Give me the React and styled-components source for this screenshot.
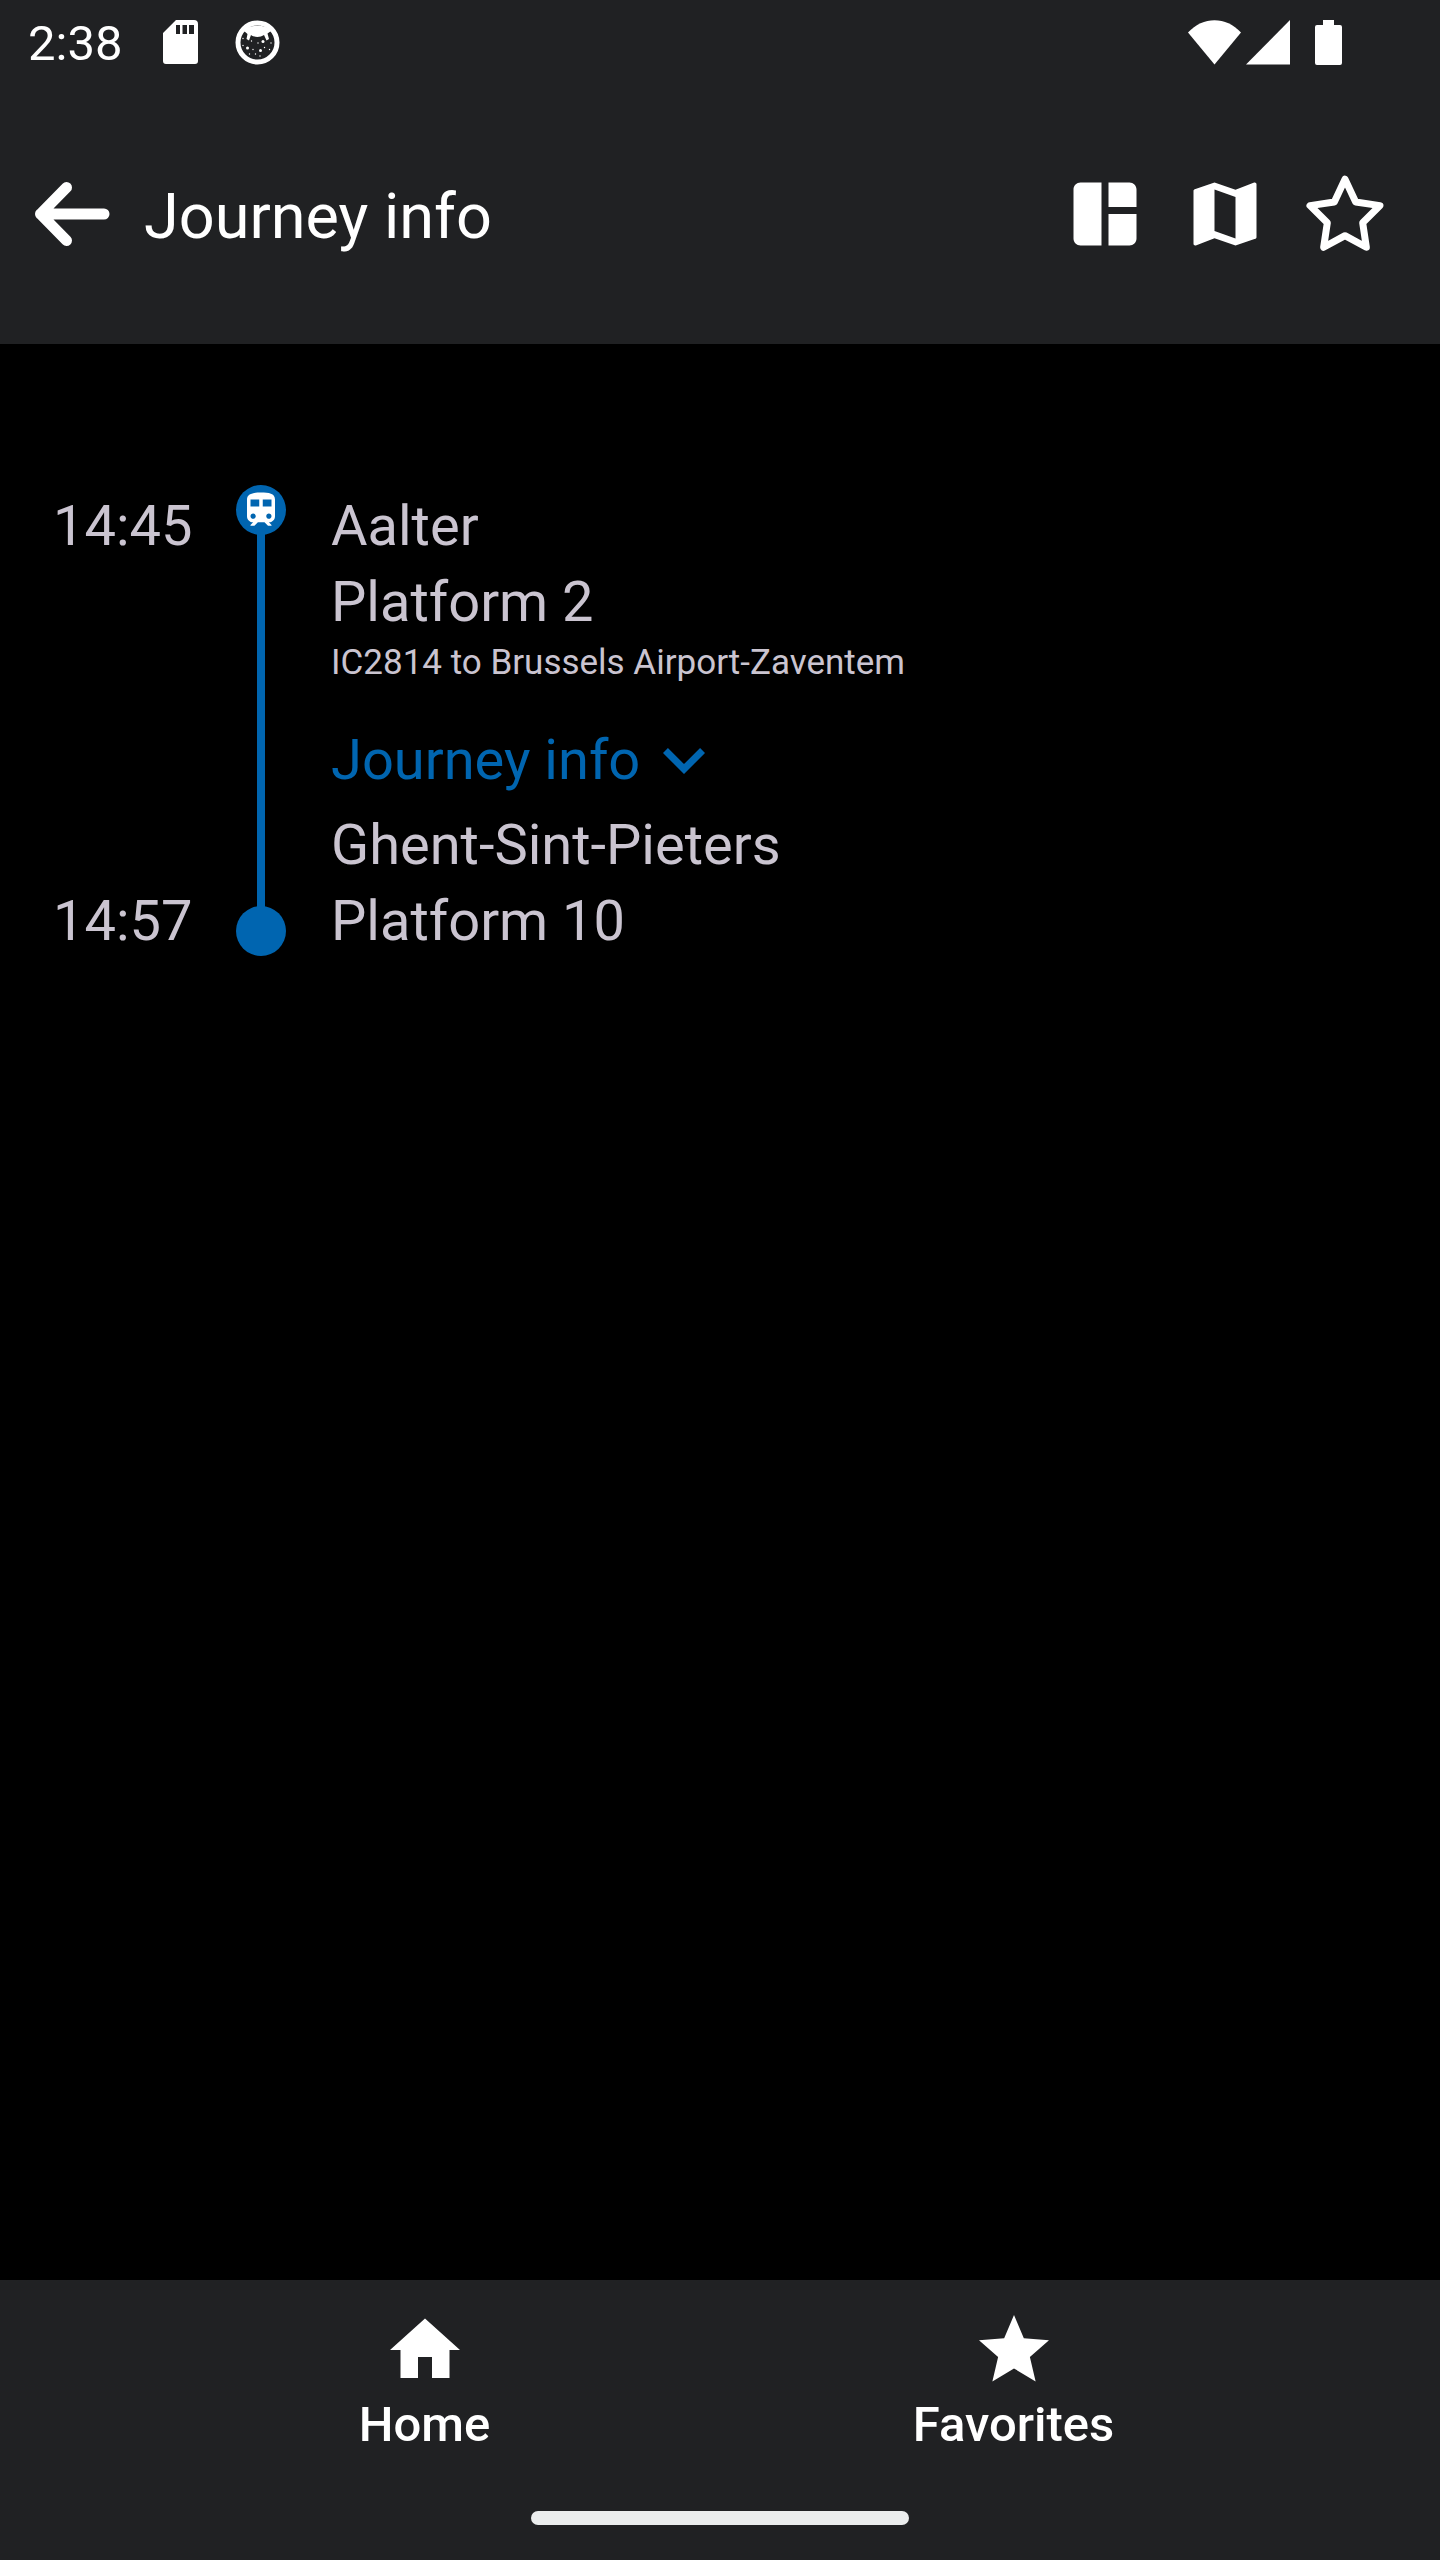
import React from "react";
import styled, { createGlobalStyle } from "styled-components";

const color = {
  bar: "#202123",
  page: "#000000",
  text: "#cac4d0",
  accent: "#0065b0",
  white: "#ffffff",
  handle: "#ebeded",
};

const GlobalStyle = createGlobalStyle`
  * { box-sizing: border-box; }
  body { margin: 0; background: ${color.page}; }
`;

const Screen = styled.div`
  display: flex;
  flex-direction: column;
  min-height: 100vh;
  background: ${color.page};
  color: ${color.text};
  font-family: Roboto, "Liberation Sans", sans-serif;
`;

const StatusBar = styled.div`
  display: flex;
  align-items: center;
  justify-content: space-between;
  height: 84px;
  padding: 0 98px 0 28px;
  background: ${color.bar};
  color: ${color.white};
`;

const StatusGroup = styled.div`
  display: flex;
  align-items: center;
  gap: ${({ $gap }) => $gap}px;
`;

const Clock = styled.time`
  padding: 4px 4px 0 0;
  font-size: 49px;
  line-height: 56px;
`;

const AppBar = styled.header`
  display: flex;
  align-items: center;
  height: 260px;
  padding: 0 53px 0 30px;
  background: ${color.bar};
  color: ${color.white};
`;

const Title = styled.h1`
  flex: 1;
  margin: 0;
  padding: 6px 0 0 30px;
  font-size: 63px;
  font-weight: 400;
  line-height: 76px;
`;

const Actions = styled.div`
  display: flex;
  gap: 36px;
`;

const IconButton = styled.button`
  display: flex;
  padding: 0;
  border: 0;
  background: none;
  color: inherit;
  cursor: pointer;
`;

const Glyph = styled.svg`
  display: block;
  flex: none;
  width: ${({ $size }) => $size || 84}px;
  height: ${({ $size }) => $size || 84}px;
  fill: currentColor;
`;

const StatusGlyph = styled.svg`
  display: block;
  flex: none;
  fill: currentColor;
`;

const Journey = styled.main`
  flex: 1;
  padding: 141px 53px;
`;

const Leg = styled.section`
  display: grid;
  grid-template-columns: 183px 50px 1fr;
`;

const Times = styled.div`
  display: flex;
  flex-direction: column;
  justify-content: space-between;
  padding-top: 3px;
`;

const Time = styled.time`
  font-size: 56px;
  line-height: 76px;
`;

const Rail = styled.div`
  display: flex;
  flex-direction: column;
  align-items: center;
  padding-bottom: 3px;
`;

const Stop = styled.span`
  display: flex;
  align-items: center;
  justify-content: center;
  width: 50px;
  height: 50px;
  border-radius: 50%;
  background: ${color.accent};
  color: ${color.white};
`;

const Track = styled.span`
  flex: 1;
  width: 8px;
  margin: -2px 0;
  background: ${color.accent};
`;

const Details = styled.div`
  padding: 3px 0 0 45px;
`;

const Line = styled.p`
  margin: 0;
  font-size: 56px;
  line-height: 76px;
`;

const Service = styled.p`
  margin: 0;
  font-size: 35px;
  line-height: 46px;
`;

const Expand = styled.button`
  display: flex;
  align-items: center;
  gap: 2px;
  margin: 32px 0 5px;
  padding: 0;
  border: 0;
  background: none;
  color: ${color.accent};
  font-family: inherit;
  font-size: 56px;
  line-height: 76px;
  cursor: pointer;
`;

const Footer = styled.footer`
  display: flex;
  flex-direction: column;
  align-items: center;
  height: 280px;
  padding: 28px 0 35px;
  background: ${color.bar};
`;

const Tabs = styled.nav`
  display: flex;
  justify-content: center;
  width: 100%;
  padding-right: 2px;
`;

const Tab = styled.a`
  display: flex;
  flex-direction: column;
  align-items: center;
  width: 589px;
  gap: 5px;
  color: ${color.white};
  font-size: 49px;
  font-weight: 500;
  line-height: 56px;
  text-decoration: none;
`;

const Handle = styled.div`
  width: 378px;
  height: 14px;
  margin-top: auto;
  border-radius: 7px;
  background: ${color.handle};
`;

function Icon({ d, size }) {
  return (
    <Glyph viewBox="0 0 24 24" $size={size} aria-hidden="true">
      <path d={d} />
    </Glyph>
  );
}

const paths = {
  dashboard:
    "M11 21H5c-1.1 0-2-.9-2-2V5c0-1.1.9-2 2-2h6v18zm2 0h6c1.1 0 2-.9 2-2v-7h-8v9zm8-11V5c0-1.1-.9-2-2-2h-6v7h8z",
  map: "M20.5 3l-.16.03L15 5.1 9 3 3.36 4.9c-.21.07-.36.25-.36.48V20.5c0 .28.22.5.5.5l.16-.03L9 18.9l6 2.1 5.64-1.9c.21-.07.36-.25.36-.48V3.5c0-.28-.22-.5-.5-.5zM15 19l-6-2.11V5l6 2.11V19z",
  train:
    "M12 2c-4 0-8 .5-8 4v9.5C4 17.43 5.57 19 7.5 19L6 20.5v.5h2.23l2-2H14l2 2h2v-.5L16.5 19c1.93 0 3.5-1.57 3.5-3.5V6c0-3.5-3.58-4-8-4zM7.5 17c-.83 0-1.5-.67-1.5-1.5S6.67 14 7.5 14s1.5.67 1.5 1.5S8.33 17 7.5 17zm3.5-7H6V6h5v4zm2 0V6h5v4h-5zm3.5 7c-.83 0-1.5-.67-1.5-1.5s.67-1.5 1.5-1.5 1.5.67 1.5 1.5-.67 1.5-1.5 1.5z",
  expand: "M16.59 8.59L12 13.17 7.41 8.59 6 10l6 6 6-6z",
  home: "M10 20v-6h4v6h5v-8h3L12 3 2 12h3v8z",
  star: "M12 17.27L18.18 21l-1.64-7.03L22 9.24l-7.19-.61L12 2 9.19 8.63 2 9.24l5.46 4.73L5.82 21z",
};

function BackIcon() {
  return (
    <Glyph viewBox="0 0 84 84" aria-hidden="true">
      <path
        d="M36.5 15.5 10.5 42l26 26.5M10.5 42H74"
        fill="none"
        stroke="currentColor"
        strokeWidth="11"
        strokeLinecap="round"
        strokeLinejoin="round"
      />
    </Glyph>
  );
}

function StarOutlineIcon() {
  return (
    <Glyph viewBox="0 0 24 24" aria-hidden="true">
      <path
        d="M12 2.05 15.05 8.57 22 9.6 17.05 14.5 18.1 21.5 12 18.2 5.9 21.5 6.95 14.5 2 9.6 8.95 8.57Z"
        fill="none"
        stroke="currentColor"
        strokeWidth="2"
        strokeLinejoin="round"
      />
    </Glyph>
  );
}

function SdCardIcon() {
  return (
    <StatusGlyph width="35" height="44" viewBox="0 0 35 44" aria-hidden="true">
      <path
        fillRule="evenodd"
        d="M13 0H31a4 4 0 0 1 4 4V41a3 3 0 0 1-3 3H3a3 3 0 0 1-3-3V13ZM13 5v9h4V5ZM19.5 5v9h4.5V5ZM26 5v9h5V5Z"
      />
    </StatusGlyph>
  );
}

function CatBadgeIcon() {
  return (
    <StatusGlyph width="45" height="45" viewBox="0 0 45 45" aria-hidden="true">
      <circle cx="22.5" cy="22.5" r="19.5" fill="none" stroke="currentColor" strokeWidth="5" />
      <path d="M9 11C13 4 32 4 36 11L32.500 13.500 34 19 31.500 20.500 29 15C25.500 17.500 19 17.500 16 15L14 20.500 11.500 19 12.500 14Z" />
      <circle cx="12.5" cy="28" r="1.5" />
      <circle cx="25.5" cy="30.5" r="1.5" />
      <circle cx="28" cy="21.5" r="1.5" />
      <circle cx="29.5" cy="27.5" r="0.7" />
      <circle cx="18" cy="29.5" r="0.7" />
      <circle cx="8" cy="25.5" r="0.7" />
      <circle cx="34.5" cy="29.5" r="0.7" />
      <circle cx="36" cy="23" r="0.7" />
      <circle cx="20.5" cy="34" r="0.7" />
      <circle cx="14.5" cy="34" r="0.7" />
      <circle cx="25" cy="36" r="0.7" />
      <circle cx="23" cy="23" r="0.7" />
      <circle cx="16.5" cy="21" r="0.7" />
      <circle cx="8" cy="18.5" r="0.7" />
    </StatusGlyph>
  );
}

function WifiIcon() {
  return (
    <StatusGlyph width="53" height="45" viewBox="0 0 53 45" aria-hidden="true">
      <path d="M26.5 44.5 0 12.5C15-4 38-4 53 12.5Z" />
    </StatusGlyph>
  );
}

function SignalIcon() {
  return (
    <StatusGlyph width="44" height="45" viewBox="0 0 44 45" aria-hidden="true">
      <path d="M44 0V44.5H0Z" />
    </StatusGlyph>
  );
}

function BatteryIcon() {
  return (
    <StatusGlyph width="27" height="45" viewBox="0 0 27 45" aria-hidden="true">
      <path d="M8 0H19V5H25a2 2 0 0 1 2 2V43a2 2 0 0 1-2 2H2a2 2 0 0 1-2-2V7a2 2 0 0 1 2-2H8Z" />
    </StatusGlyph>
  );
}

export default function App() {
  return (
    <Screen>
      <GlobalStyle />
      <StatusBar>
        <StatusGroup $gap={37}>
          <Clock>2:38</Clock>
          <SdCardIcon />
          <CatBadgeIcon />
        </StatusGroup>
        <StatusGroup $gap={25}>
          <StatusGroup $gap={5}>
            <WifiIcon />
            <SignalIcon />
          </StatusGroup>
          <BatteryIcon />
        </StatusGroup>
      </StatusBar>
      <AppBar>
        <IconButton type="button" aria-label="Back">
          <BackIcon />
        </IconButton>
        <Title>Journey info</Title>
        <Actions>
          <IconButton type="button" aria-label="Layout">
            <Icon d={paths.dashboard} />
          </IconButton>
          <IconButton type="button" aria-label="Map">
            <Icon d={paths.map} />
          </IconButton>
          <IconButton type="button" aria-label="Add to favorites">
            <StarOutlineIcon />
          </IconButton>
        </Actions>
      </AppBar>
      <Journey>
        <Leg>
          <Times>
            <Time>14:45</Time>
            <Time>14:57</Time>
          </Times>
          <Rail>
            <Stop>
              <Icon d={paths.train} size={42} />
            </Stop>
            <Track />
            <Stop />
          </Rail>
          <Details>
            <Line>Aalter</Line>
            <Line>Platform 2</Line>
            <Service>IC2814 to Brussels Airport-Zaventem</Service>
            <Expand type="button" aria-expanded="false">
              Journey info
              <Icon d={paths.expand} />
            </Expand>
            <Line>Ghent-Sint-Pieters</Line>
            <Line>Platform 10</Line>
          </Details>
        </Leg>
      </Journey>
      <Footer>
        <Tabs aria-label="Main">
          <Tab href="#home">
            <Icon d={paths.home} />
            Home
          </Tab>
          <Tab href="#favorites">
            <Icon d={paths.star} />
            Favorites
          </Tab>
        </Tabs>
        <Handle />
      </Footer>
    </Screen>
  );
}
